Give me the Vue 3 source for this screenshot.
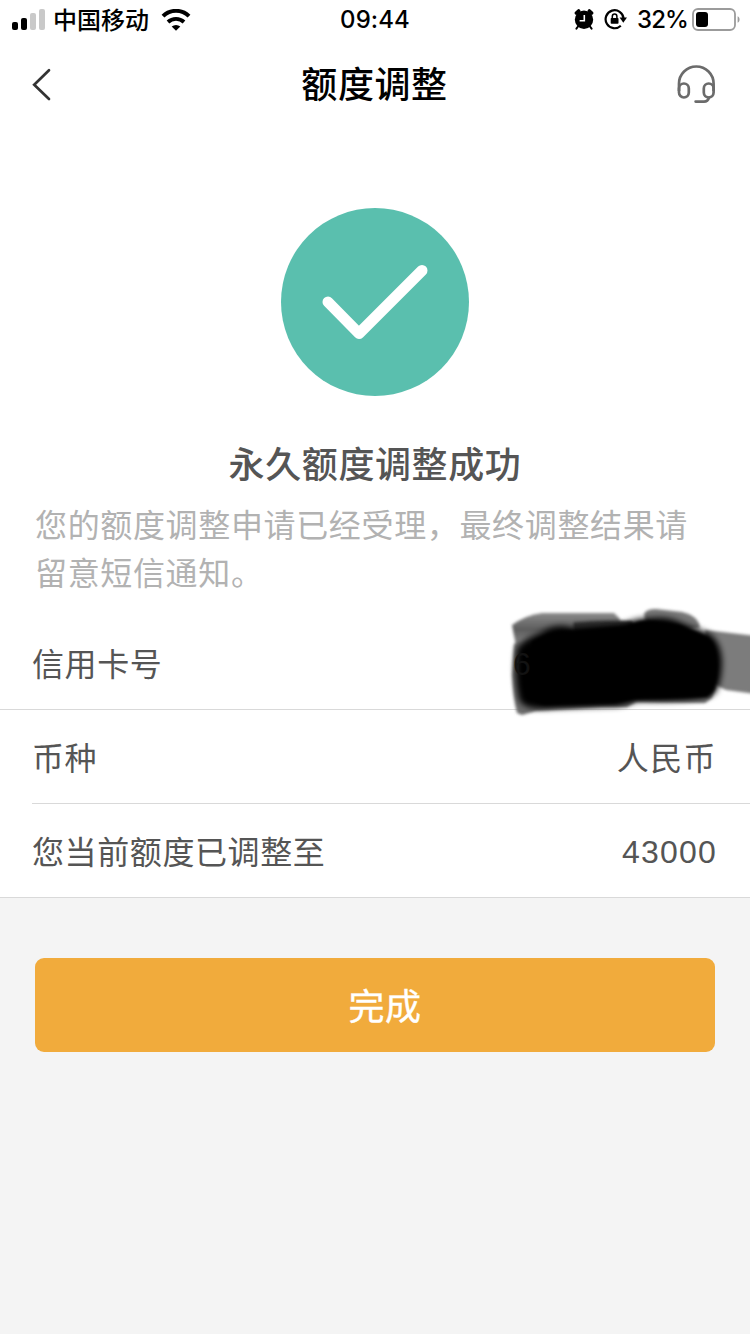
<script setup>
const title = '额度调整'
const rows = [
  { label: '信用卡号', value: '6', masked: true },
  { label: '币种', value: '人民币', cjk: true },
  { label: '您当前额度已调整至', value: '43000' },
]
</script>

<template>
  <div class="screen">
    <header class="status">
      <div class="status-left">
        <svg class="signal" width="34" height="22" viewBox="0 0 34 22">
          <rect x="0" y="13" width="6" height="8" rx="2" fill="#000" />
          <rect x="9" y="9" width="6" height="12" rx="2" fill="#000" />
          <rect x="18" y="4" width="6" height="17" rx="2" fill="#c9c9c9" />
          <rect x="27" y="0" width="6" height="21" rx="2" fill="#c9c9c9" />
        </svg>
        <span class="carrier">中国移动</span>
        <svg class="wifi" width="30" height="22" viewBox="0 0 30 22">
          <path d="M2 7.2A18.4 18.4 0 0 1 28 7.2" fill="none" stroke="#000" stroke-width="4" />
          <path d="M7 13A11.6 11.6 0 0 1 23 13" fill="none" stroke="#000" stroke-width="3.8" />
          <path d="M10.7 17.6A6.4 6.4 0 0 1 19.3 17.6L15 21.8Z" fill="#000" />
        </svg>
      </div>
      <span class="time">09:44</span>
      <div class="status-right">
        <svg class="alarm" width="20" height="22" viewBox="0 0 20 22">
          <circle cx="10" cy="10.8" r="9.2" />
          <path d="M2.4 4L4.6 2M17.6 4L15.4 2" stroke="#000" stroke-width="3.6" stroke-linecap="round" />
          <path d="M4 17.5L2.4 19.6M16 17.5L17.6 19.6" stroke="#000" stroke-width="2" stroke-linecap="round" />
          <path d="M10.3 6V11.8H5.6" fill="none" stroke="#fff" stroke-width="1.6" />
        </svg>
        <svg class="lock" width="23" height="22" viewBox="0 0 23 22">
          <path d="M16.8 16.8A9 9 0 1 1 19.6 9.6" fill="none" stroke="#000" stroke-width="2.2" />
          <path d="M15.6 8.6H23L19.3 13.8Z" />
          <rect x="6.7" y="9" width="7.8" height="5.8" rx="0.8" />
          <path d="M8.3 10V7.4A2.3 2.3 0 0 1 12.9 7.4V10" fill="none" stroke="#000" stroke-width="1.5" />
        </svg>
        <span class="percent">32%</span>
        <svg class="battery" width="48" height="24" viewBox="0 0 48 24">
          <rect x="1" y="1" width="42" height="21" rx="5" fill="none" stroke="#9b9b9b" stroke-width="1.8" />
          <rect x="4" y="4" width="12" height="15" rx="3" fill="#000" />
          <path d="M45.6 8.2C48.2 9 48.2 14 45.6 14.8Z" fill="#9b9b9b" />
        </svg>
      </div>
    </header>

    <nav class="nav">
      <svg class="back" width="20" height="34" viewBox="0 0 20 34">
        <path d="M18 3.3L3.2 17.7L18 32" fill="none" stroke="#333" stroke-width="2.7" stroke-linecap="round" />
      </svg>
      <h1>{{ title }}</h1>
      <svg class="headset" width="40" height="40" viewBox="0 0 40 40" fill="none" stroke="#6b6b6b" stroke-width="2.7">
        <path d="M3 27V19.8A17.3 17.3 0 0 1 37.6 19.8V27" />
        <rect x="3" y="19.5" width="9.8" height="14" rx="4.9" />
        <rect x="27.8" y="19.5" width="9.8" height="14" rx="4.9" />
        <path d="M33 33.6C32.2 36.4 30.4 37.6 28 37.6H19.6" stroke-linecap="round" />
      </svg>
    </nav>

    <section class="result">
      <svg class="success" width="188" height="188" viewBox="0 0 188 188">
        <circle cx="94" cy="94" r="94" fill="#5abfae" />
        <path d="M47 94L78 125.5L141 62.5" fill="none" stroke="#fff" stroke-width="11" stroke-linecap="round" stroke-linejoin="round" />
      </svg>
      <h2>永久额度调整成功</h2>
      <p>您的额度调整申请已经受理，最终调整结果请留意短信通知。</p>
    </section>

    <section class="details">
      <div v-for="row in rows" :key="row.label" class="row">
        <span class="label">{{ row.label }}</span>
        <span class="value" :class="{ masked: row.masked, cjk: row.cjk }">{{ row.value }}</span>
        <svg v-if="row.masked" class="mask" width="260" height="140" viewBox="0 0 260 140">
          <defs>
            <filter id="soft" x="-10%" y="-10%" width="120%" height="120%"><feGaussianBlur stdDeviation="1.8" /></filter>
            <filter id="softer" x="-10%" y="-20%" width="120%" height="140%"><feGaussianBlur stdDeviation="3" /></filter>
            <linearGradient id="fade" x1="0" y1="0" x2="0" y2="1">
              <stop offset="0" stop-color="#8a8a8a" />
              <stop offset="0.5" stop-color="#5c5c5c" />
              <stop offset="1" stop-color="#888" />
            </linearGradient>
          </defs>
          <g filter="url(#soft)">
            <path d="M22 35Q36 25 52 23H124L130 29L128 50L26 56Z" fill="url(#fade)" />
            <path d="M154 24Q156 19 166 19L192 22Q209 26 210 38L170 42L155 31Z" fill="#777" />
            <path d="M215 40L266 46V104L236 100L215 90Z" fill="#7c7c7c" />
            <path d="M24 54L40 48V60L42 100L200 100L226 96L222 108L215 113L146 112L137 117L112 117L46 121L32 125L27 123Q23 108 22 85Z" fill="#6c6c6c" />
            <path d="M83 32Q110 29 142 31L150 45L84 50Z" fill="#333" />
          </g>
          <path d="M27 58Q36 48 50 43Q66 32 82 38L134 34Q146 28 160 28Q178 26 192 33L218 43Q231 50 232 72Q232 92 225 103Q215 112 148 111L128 116L64 118Q33 121 29 109Q23 82 27 58Z" fill="#000" filter="url(#softer)" />
          <path d="M42 52Q64 39 84 41L138 36Q150 30 163 31L190 35L217 47Q227 54 227 78Q227 99 217 107L145 109L124 113L56 115Q42 114 39 98Z" fill="#000" filter="url(#soft)" />
        </svg>
      </div>
    </section>

    <main class="actions">
      <button type="button">完成</button>
    </main>
  </div>
</template>

<style>
body {
  margin: 0;
  background: #f4f4f4;
}
</style>

<style scoped>
.screen {
  width: 750px;
  height: 1334px;
  overflow: hidden;
  background: #f4f4f4;
  color: #555;
  font-family: "Liberation Sans", "Noto Sans CJK SC", sans-serif;
}

svg {
  display: block;
  flex: none;
}

.status {
  display: grid;
  grid-template-columns: 1fr auto 1fr;
  align-items: center;
  height: 40px;
  background: #fff;
  color: #000;
  font-family: Inter, "Noto Sans CJK SC", sans-serif;
}

.status-left,
.status-right {
  display: flex;
  align-items: center;
}

.status-left {
  padding-left: 12px;
}

.carrier {
  margin-left: 7px;
  padding-bottom: 2px;
  font-family: "Noto Sans CJK SC", sans-serif;
  font-size: 24px;
  font-weight: 500;
  line-height: 36px;
}

.wifi {
  margin-left: 12px;
}

.time {
  padding-bottom: 1px;
  font-size: 24px;
  font-weight: 500;
  letter-spacing: 0.1px;
}

.status-right {
  justify-content: flex-end;
  padding-right: 10px;
}

.alarm,
.lock {
  margin-bottom: 1px;
}

.lock {
  margin-left: 10px;
}

.percent {
  margin-left: 10px;
  padding-bottom: 1px;
  font-size: 24px;
  font-weight: 500;
  letter-spacing: -0.9px;
}

.battery {
  margin-left: 4px;
}

.nav {
  display: flex;
  align-items: center;
  justify-content: space-between;
  height: 88px;
  padding: 0 34px 0 31px;
  background: #fff;
}

.back {
  margin-right: 20px;
}

h1,
h2,
p {
  margin: 0;
  font-family: "Noto Sans CJK SC", sans-serif;
}

h1 {
  padding: 0 0 4px 2px;
  color: #000;
  font-size: 36px;
  font-weight: 500;
  letter-spacing: 0.6px;
  line-height: 52px;
}

.result {
  display: flex;
  flex-direction: column;
  align-items: center;
  box-sizing: border-box;
  height: 488px;
  padding: 80px 35px 0;
  background: #fff;
}

h2 {
  margin-top: 40px;
  font-size: 36px;
  font-weight: 500;
  letter-spacing: 0.6px;
  line-height: 52px;
}

p {
  align-self: stretch;
  margin-top: 11px;
  color: #b2b2b2;
  font-size: 32px;
  font-weight: 400;
  letter-spacing: 0.65px;
  line-height: 48px;
}

.row {
  position: relative;
  display: flex;
  align-items: center;
  justify-content: space-between;
  box-sizing: border-box;
  height: 94px;
  padding: 0 33px 0 32px;
  border-bottom: 1px solid #d9d9d9;
  background: #fff;
  font-size: 32px;
}

.row:first-child {
  z-index: 1;
}

.row:nth-child(2) {
  border-bottom: 0;
  background: linear-gradient(#d9d9d9, #d9d9d9) 32px 93px / 718px 1px no-repeat #fff;
}

.label,
.cjk {
  padding-bottom: 2px;
  font-family: "Noto Sans CJK SC", sans-serif;
  font-weight: 400;
  letter-spacing: 0.6px;
  line-height: 48px;
}

.value {
  letter-spacing: 1.2px;
}

.value:not(.cjk) {
  padding-top: 4px;
}

.value.cjk {
  letter-spacing: 1.4px;
}

.masked {
  position: relative;
  z-index: 2;
  width: 204px;
  color: #121212;
}

.mask {
  position: absolute;
  z-index: 1;
  right: 0;
  top: -26px;
}

.actions {
  display: flex;
  padding: 60px 35px;
}

button {
  flex: 1;
  height: 94px;
  padding: 0 0 3px 20px;
  border: 0;
  border-radius: 9px;
  background: #f1ab3c;
  color: #fff;
  font-family: "Noto Sans CJK SC", sans-serif;
  font-size: 36px;
  font-weight: 400;
  letter-spacing: 0.6px;
  -webkit-text-stroke: 0.4px #fff;
}
</style>
